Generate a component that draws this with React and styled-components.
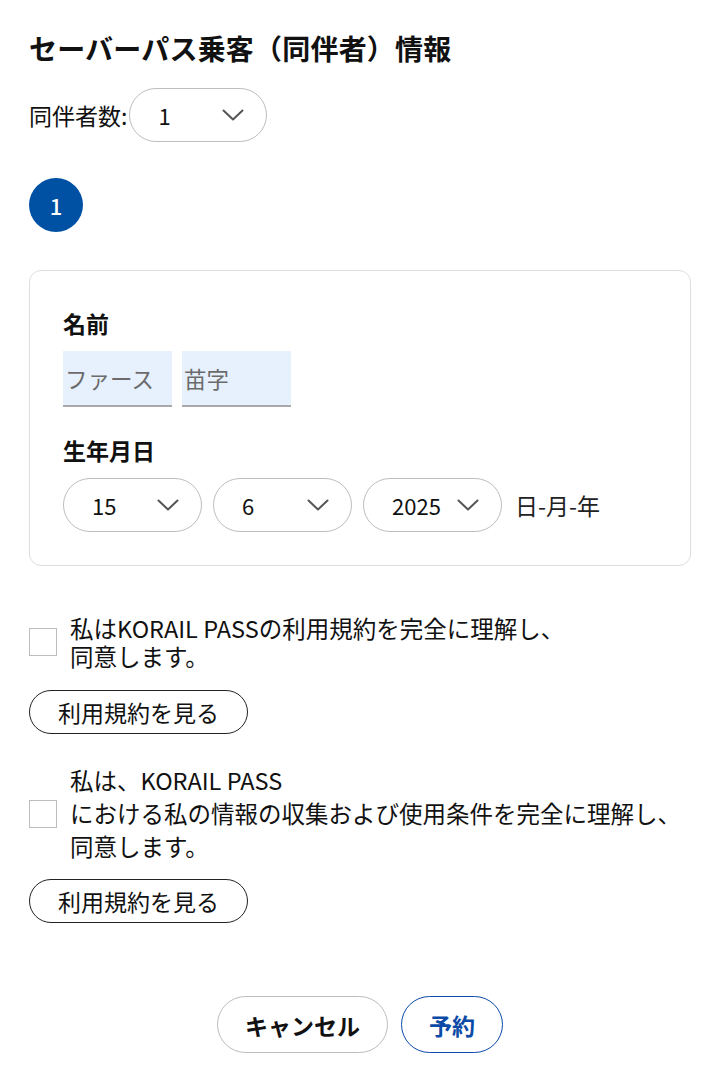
import React from "react";
import styled, { createGlobalStyle } from "styled-components";

const GlobalStyle = createGlobalStyle`
  body {
    margin: 0;
    background: #fff;
    color: #111;
    font-family: "Noto Sans CJK JP", "Noto Sans", sans-serif;
  }
`;

const Page = styled.div`
  padding: 28px 29px 30px;
  display: flex;
  flex-direction: column;
`;

const Title = styled.h2`
  margin: 0;
  font-size: 28px;
  line-height: 40px;
  font-weight: 700;
  letter-spacing: 0.2px;
`;

const CountRow = styled.div`
  display: flex;
  align-items: center;
  gap: 2px;
  margin-top: 20px;
  font-size: 23px;
`;

const Select = styled.div`
  box-sizing: border-box;
  display: flex;
  align-items: center;
  width: ${(p) => p.$width || 139}px;
  height: 54px;
  padding: 0 22px 0 28px;
  border: 1px solid #bdbdbd;
  border-radius: 27px;
  background: #fff;
  font-size: 22px;
  color: #111;
`;

const SelectValue = styled.span`
  flex: 1;
`;

const Chevron = () => (
  <svg width="22" height="12" viewBox="0 0 22 12" fill="none">
    <polyline points="1.5,1.5 11,10.5 20.5,1.5" stroke="#555" strokeWidth="2" strokeLinecap="round" strokeLinejoin="round" />
  </svg>
);

const Badge = styled.div`
  width: 54px;
  height: 54px;
  border-radius: 50%;
  background: #0051a3;
  color: #fff;
  display: flex;
  align-items: center;
  justify-content: center;
  font-size: 22px;
  font-weight: 500;
  margin-top: 36px;
`;

const Card = styled.section`
  margin-top: 38px;
  border: 1px solid #dedede;
  border-radius: 12px;
  padding: 37px 33px 33px;
  display: flex;
  flex-direction: column;
`;

const FieldLabel = styled.div`
  font-size: 23px;
  line-height: 30px;
  font-weight: 700;
  margin-top: ${(p) => p.$top || 0}px;
`;

const NameRow = styled.div`
  display: flex;
  gap: 10px;
  margin-top: 13px;
`;

const NameInput = styled.input`
  box-sizing: border-box;
  width: 109px;
  height: 56px;
  padding: 0 2px;
  border: none;
  border-bottom: 2px solid #a9a9a9;
  background: #e6f1fd;
  font-family: inherit;
  font-size: 22.5px;
  color: #111;
  outline: none;
  &::placeholder {
    color: #6b6b6b;
  }
`;

const DateRow = styled.div`
  display: flex;
  align-items: center;
  gap: 11px;
  margin-top: 13px;
`;

const DateSuffix = styled.span`
  margin-left: 2px;
  font-size: 23px;
  color: #222;
`;

const Agreement = styled.label`
  display: flex;
  align-items: center;
  gap: 13px;
  margin-top: ${(p) => p.$top}px;
`;

const CheckBox = styled.span`
  box-sizing: border-box;
  flex: none;
  width: 28px;
  height: 28px;
  border: 1px solid #bdbdbd;
  background: #fff;
`;

const AgreementText = styled.p`
  margin: 0;
  font-size: 23.5px;
  line-height: ${(p) => p.$lh}px;
  color: #111;
`;

const TermsButton = styled.button`
  align-self: flex-start;
  box-sizing: border-box;
  width: 219px;
  height: 44px;
  margin-top: ${(p) => p.$top}px;
  border: 1px solid #222;
  border-radius: 22px;
  background: #fff;
  font-family: inherit;
  font-size: 23px;
  color: #111;
  padding: 0;
`;

const Footer = styled.div`
  display: flex;
  justify-content: center;
  gap: 13px;
  margin-top: 73px;
`;

const FooterButton = styled.button`
  box-sizing: border-box;
  height: 57px;
  padding: 0 ${(p) => p.$pad}px;
  border-radius: 29px;
  border: 1px solid ${(p) => (p.$primary ? "#0b4aa6" : "#bdbdbd")};
  background: #fff;
  color: ${(p) => (p.$primary ? "#0b4aa6" : "#111")};
  font-family: inherit;
  font-size: 23px;
  font-weight: 700;
`;

export default function App() {
  return (
    <>
      <GlobalStyle />
      <Page>
        <Title>セーバーパス乗客（同伴者）情報</Title>

        <CountRow>
          <span>同伴者数:</span>
          <Select $width={138}>
            <SelectValue>1</SelectValue>
            <Chevron />
          </Select>
        </CountRow>

        <Badge>1</Badge>

        <Card>
          <FieldLabel>名前</FieldLabel>
          <NameRow>
            <NameInput placeholder="ファース" />
            <NameInput placeholder="苗字" />
          </NameRow>

          <FieldLabel $top={28}>生年月日</FieldLabel>
          <DateRow>
            <Select>
              <SelectValue>15</SelectValue>
              <Chevron />
            </Select>
            <Select>
              <SelectValue>6</SelectValue>
              <Chevron />
            </Select>
            <Select>
              <SelectValue>2025</SelectValue>
              <Chevron />
            </Select>
            <DateSuffix>日-月-年</DateSuffix>
          </DateRow>
        </Card>

        <Agreement $top={48}>
          <CheckBox />
          <AgreementText $lh={28}>
            私はKORAIL PASSの利用規約を完全に理解し、
            <br />
            同意します。
          </AgreementText>
        </Agreement>
        <TermsButton $top={20}>利用規約を見る</TermsButton>

        <Agreement $top={30}>
          <CheckBox />
          <AgreementText $lh={33}>
            私は、KORAIL PASS
            <br />
            における私の情報の収集および使用条件を完全に理解し、
            <br />
            同意します。
          </AgreementText>
        </Agreement>
        <TermsButton $top={16}>利用規約を見る</TermsButton>

        <Footer>
          <FooterButton $pad={27}>キャンセル</FooterButton>
          <FooterButton $pad={27} $primary>予約</FooterButton>
        </Footer>
      </Page>
    </>
  );
}
